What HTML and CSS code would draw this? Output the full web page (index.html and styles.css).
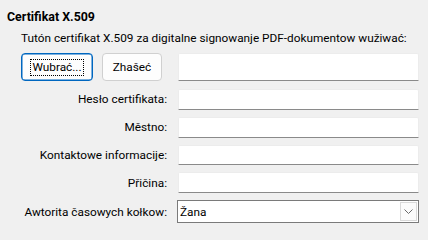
FILE: index.html
```html
<!DOCTYPE html>
<html lang="hsb">
<head>
<meta charset="utf-8">
<title>Certifikat X.509</title>
<link rel="stylesheet" href="styles.css">
</head>
<body>
<div class="group">
  <div class="title">Certifikat X.509</div>
  <div class="desc">Tutón certifikat X.509 za digitalne signowanje PDF-dokumentow wužiwać:</div>
  <div class="form">
    <div class="btns">
      <button class="btn primary"><span class="focus">Wubrać...</span></button>
      <button class="btn">Zhašeć</button>
    </div>
    <input class="field tall" type="text">
    <label class="lbl">Hesło certifikata:</label>
    <input class="field" type="text">
    <label class="lbl">Městno:</label>
    <input class="field" type="text">
    <label class="lbl">Kontaktowe informacije:</label>
    <input class="field" type="text">
    <label class="lbl">Přičina:</label>
    <input class="field" type="text">
    <label class="lbl">Awtorita časowych kołkow:</label>
    <div class="combo">
      <span class="combo-text">Žana</span>
      <span class="drop"><svg width="9" height="5" viewBox="0 0 9 5"><path d="M0.5 0.5 L4.5 4.5 L8.5 0.5" fill="none" stroke="#6a6a6a" stroke-width="1"/></svg></span>
    </div>
  </div>
</div>
</body>
</html>
```
FILE: styles.css
```css
html, body {
  margin: 0;
  padding: 0;
  background: #f0f0f0;
}
body {
  width: 428px;
  height: 231px;
  overflow: hidden;
  font-family: Roboto, "Noto Sans", sans-serif;
  font-size: 11.8px;
  color: #000;
}
.group {
  padding-top: 9px;
}
.title {
  font-weight: bold;
  font-size: 12.4px;
  line-height: 16px;
  padding-left: 7px;
}
.desc {
  line-height: 16px;
  margin-top: 5px;
  padding-left: 21px;
}
.form {
  margin-top: 7px;
  display: grid;
  grid-template-columns: 167px 242px;
  column-gap: 10px;
  row-gap: 7px;
  align-items: center;
}
.btns {
  display: flex;
  gap: 9px;
  padding-left: 21px;
  margin-bottom: 1px;
}
.btn {
  font: inherit;
  color: #000;
  height: 28px;
  background: #fdfdfd;
  border: 1px solid #d0d0d0;
  border-radius: 4px;
  padding: 0;
  display: flex;
  align-items: center;
  justify-content: center;
  width: 60px;
}
.btn.primary {
  width: 72px;
  border-color: #0067c0;
  box-shadow: inset 0 0 0 0.5px #0067c0;
}
.focus {
  outline: 1px dotted #000;
  padding: 0 1px;
  line-height: 15px;
}
.field {
  box-sizing: border-box;
  margin: 0 0 0 1px;
  width: 241px;
  height: 20.75px;
  background: #fff;
  border: 1px solid #ececec;
  border-bottom-color: #8a8a8a;
  border-radius: 2px 2px 0 0;
  padding: 0 3px;
  font: inherit;
}
.field.tall {
  height: 28px;
  margin-bottom: 1px;
}
.lbl {
  justify-self: end;
  line-height: 16px;
}
.combo {
  box-sizing: border-box;
  width: 242px;
  height: 23px;
  background: #fff;
  border: 1px solid #7a7a7a;
  display: flex;
  align-items: center;
  justify-content: space-between;
  padding: 1px;
}
.combo-text {
  padding-left: 1px;
  line-height: 16px;
}
.drop {
  box-sizing: border-box;
  width: 17px;
  height: 100%;
  border: 1px solid #d9d9d9;
  background: #fbfbfb;
  display: flex;
  align-items: center;
  justify-content: center;
}
```
